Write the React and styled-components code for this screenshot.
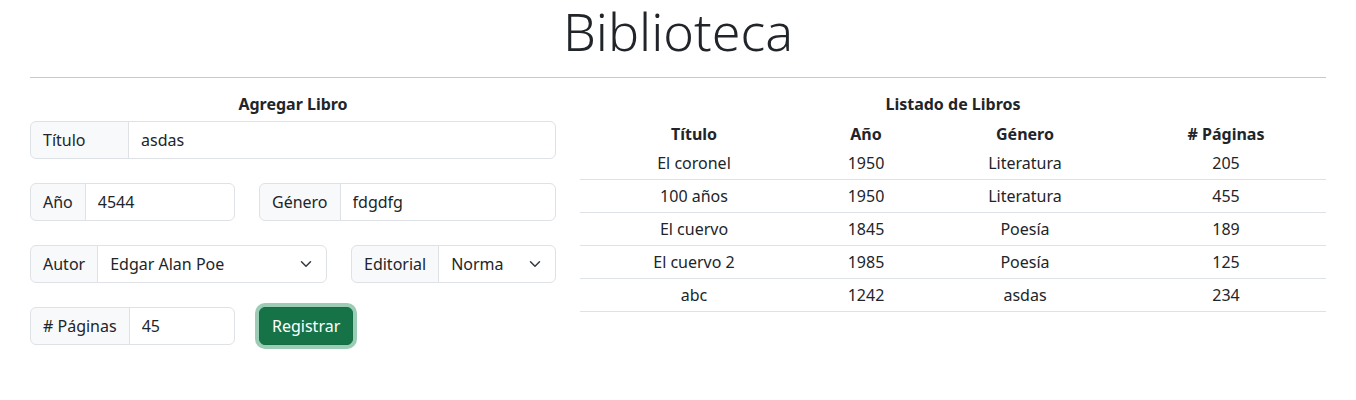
import React from 'react';
import styled, {createGlobalStyle} from 'styled-components';

const GlobalStyle = createGlobalStyle`
  body {
    margin: 0;
    background: #fff;
    color: #212529;
    font-family: "Noto Sans", "Open Sans", sans-serif;
    font-size: 16px;
    line-height: 1.5;
  }
  * {
    box-sizing: border-box;
  }
`;

const Page = styled.div`
  padding: 0 30px;
`;

const Title = styled.h1`
  margin: 0;
  font-size: 52px;
  font-weight: 300;
  line-height: 62px;
  text-align: center;
`;

const Divider = styled.hr`
  margin: 15px 0 14px;
  border: 0;
  border-top: 1px solid #c8c9ca;
`;

const Columns = styled.div`
  display: grid;
  grid-template-columns: minmax(0, 526fr) minmax(0, 746fr);
  column-gap: 24px;
`;

const SectionTitle = styled.div`
  font-weight: 700;
  text-align: center;
  line-height: 24px;
  margin-bottom: ${props => props.gap || 0}px;
`;

const FieldRow = styled.div`
  display: grid;
  grid-template-columns: ${props => props.cols || 'minmax(0, 1fr)'};
  column-gap: 24px;
  margin-bottom: 24px;
  align-items: start;
`;

const InputGroup = styled.div`
  display: flex;
  height: 38px;
  min-width: 0;
`;

const Addon = styled.span`
  display: flex;
  align-items: center;
  flex: 0 0 auto;
  min-width: ${props => props.width || 0}px;
  padding: 0 12px;
  background: #f8f9fa;
  border: 1px solid #dee2e6;
  border-radius: 6px 0 0 6px;
  white-space: nowrap;
`;

const TextInput = styled.input`
  flex: 1 1 auto;
  width: 0;
  min-width: 0;
  margin-left: -1px;
  padding: 0 12px;
  font: inherit;
  color: #212529;
  background: #fff;
  border: 1px solid #dee2e6;
  border-radius: 0 6px 6px 0;
  outline: none;
`;

const SelectBox = styled.div`
  position: relative;
  display: flex;
  align-items: center;
  flex: 1 1 auto;
  min-width: 0;
  margin-left: -1px;
  padding: 0 36px 0 12px;
  background: #fff;
  border: 1px solid #dee2e6;
  border-radius: 0 6px 6px 0;
  white-space: nowrap;
`;

const Caret = styled.svg`
  position: absolute;
  right: 12px;
  top: 50%;
  width: 16px;
  height: 12px;
  margin-top: -6px;
`;

const SubmitButton = styled.button`
  justify-self: start;
  height: 38px;
  padding: 0 12px;
  font: inherit;
  color: #fff;
  background: #157347;
  border: 1px solid #146c43;
  border-radius: 6px;
  box-shadow: 0 0 0 4px rgba(60, 153, 110, 0.5);
  cursor: pointer;
`;

const Table = styled.table`
  width: 100%;
  border-collapse: collapse;
  table-layout: fixed;
  margin-top: 3px;
`;

const HeadCell = styled.th`
  padding: 3px 8px 1px;
  font-weight: 700;
  text-align: center;
  line-height: 24px;
  white-space: nowrap;
`;

const Cell = styled.td`
  padding: 4px 8px;
  text-align: center;
  line-height: 24px;
  border-bottom: 1px solid #dee2e6;
`;

const Select = ({value}) => (
  <SelectBox>
    {value}
    <Caret viewBox="0 0 16 16">
      <path
        fill="none"
        stroke="#343a40"
        strokeLinecap="round"
        strokeLinejoin="round"
        strokeWidth="2"
        d="m2 5 6 6 6-6"
      />
    </Caret>
  </SelectBox>
);

const books = [
  {title: 'El coronel', year: 1950, genre: 'Literatura', pages: 205},
  {title: '100 años', year: 1950, genre: 'Literatura', pages: 455},
  {title: 'El cuervo', year: 1845, genre: 'Poesía', pages: 189},
  {title: 'El cuervo 2', year: 1985, genre: 'Poesía', pages: 125},
  {title: 'abc', year: 1242, genre: 'asdas', pages: 234}
];

const narrowWide = 'minmax(0, 205fr) minmax(0, 297fr)';
const wideNarrow = 'minmax(0, 297fr) minmax(0, 205fr)';

const BookForm = () => (
  <div>
    <SectionTitle gap={5}>Agregar Libro</SectionTitle>
    <FieldRow>
      <InputGroup>
        <Addon width={99}>Título</Addon>
        <TextInput defaultValue="asdas" />
      </InputGroup>
    </FieldRow>
    <FieldRow cols={narrowWide}>
      <InputGroup>
        <Addon>Año</Addon>
        <TextInput defaultValue="4544" />
      </InputGroup>
      <InputGroup>
        <Addon>Género</Addon>
        <TextInput defaultValue="fdgdfg" />
      </InputGroup>
    </FieldRow>
    <FieldRow cols={wideNarrow}>
      <InputGroup>
        <Addon>Autor</Addon>
        <Select value="Edgar Alan Poe" />
      </InputGroup>
      <InputGroup>
        <Addon>Editorial</Addon>
        <Select value="Norma" />
      </InputGroup>
    </FieldRow>
    <FieldRow cols={narrowWide}>
      <InputGroup>
        <Addon># Páginas</Addon>
        <TextInput defaultValue="45" />
      </InputGroup>
      <SubmitButton type="button">Registrar</SubmitButton>
    </FieldRow>
  </div>
);

const BookList = () => (
  <div>
    <SectionTitle>Listado de Libros</SectionTitle>
    <Table>
      <colgroup>
        <col style={{width: 228}} />
        <col style={{width: 116}} />
        <col style={{width: 202}} />
        <col />
      </colgroup>
      <thead>
        <tr>
          <HeadCell>Título</HeadCell>
          <HeadCell>Año</HeadCell>
          <HeadCell>Género</HeadCell>
          <HeadCell># Páginas</HeadCell>
        </tr>
      </thead>
      <tbody>
        {books.map(book => (
          <tr key={book.title}>
            <Cell>{book.title}</Cell>
            <Cell>{book.year}</Cell>
            <Cell>{book.genre}</Cell>
            <Cell>{book.pages}</Cell>
          </tr>
        ))}
      </tbody>
    </Table>
  </div>
);

export default function App() {
  return (
    <Page>
      <GlobalStyle />
      <Title>Biblioteca</Title>
      <Divider />
      <Columns>
        <BookForm />
        <BookList />
      </Columns>
    </Page>
  );
}
